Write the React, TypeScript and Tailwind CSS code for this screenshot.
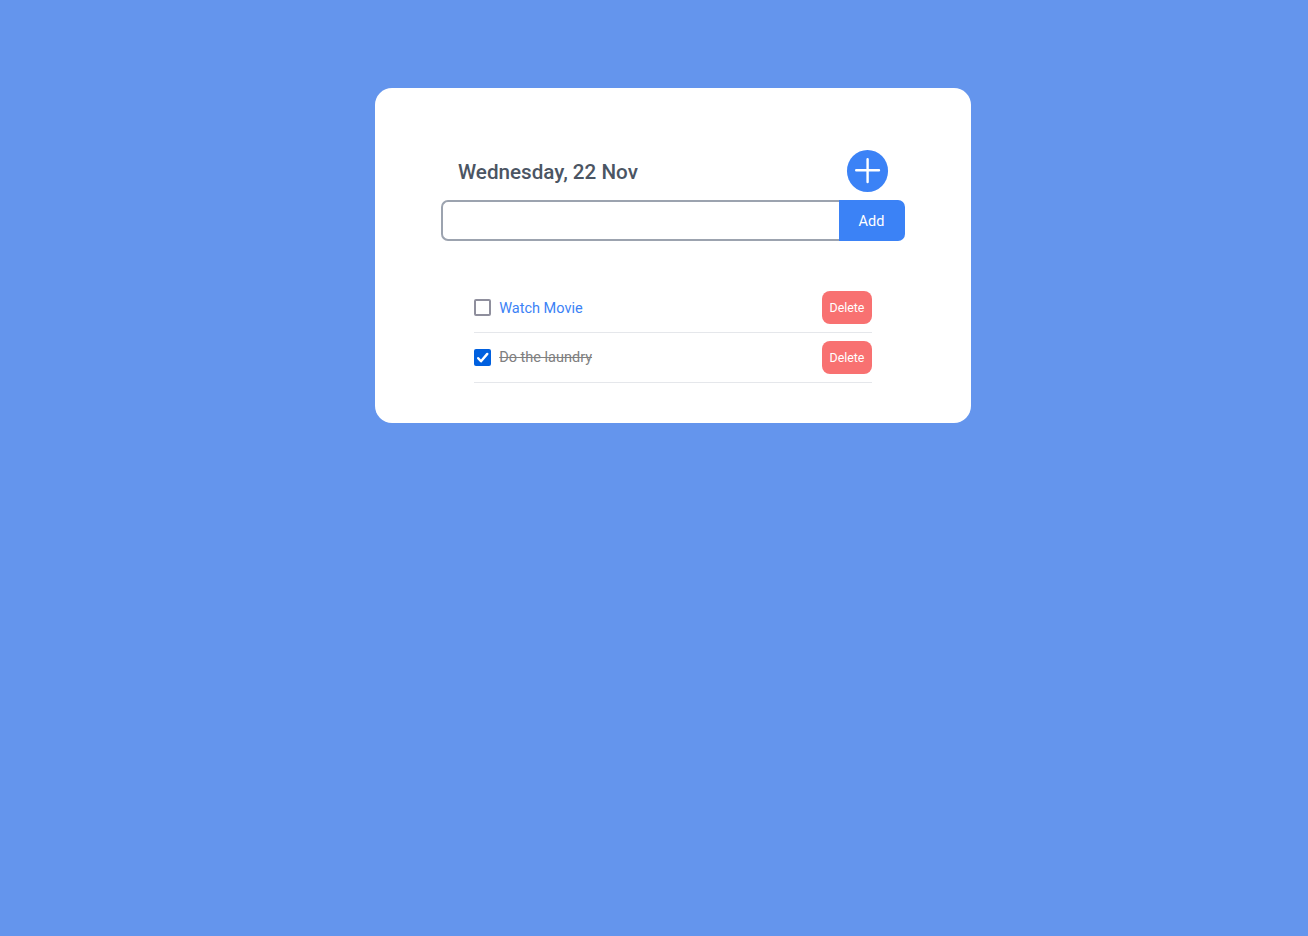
import React, { useState } from "react";

type Todo = { id: number; text: string; done: boolean };

const initialTodos: Todo[] = [
  { id: 1, text: "Watch Movie", done: false },
  { id: 2, text: "Do the laundry", done: true },
];

function CheckBox({ checked, onChange }: { checked: boolean; onChange: () => void }) {
  return (
    <button
      role="checkbox"
      aria-checked={checked}
      onClick={onChange}
      className={`flex h-[17px] w-[17px] shrink-0 items-center justify-center rounded-[2px] ${
        checked ? "bg-[#0060df]" : "border-2 border-[#8f8f9d] bg-white"
      }`}
    >
      {checked && (
        <svg viewBox="0 0 17 17" className="h-[17px] w-[17px]" fill="none" stroke="white" strokeWidth="2.4" strokeLinecap="round" strokeLinejoin="round">
          <path d="M4.2 9.2 7 12.3 13.3 4.9" />
        </svg>
      )}
    </button>
  );
}

export default function App() {
  const [todos, setTodos] = useState(initialTodos);
  const toggle = (id: number) => setTodos(todos.map((t) => (t.id === id ? { ...t, done: !t.done } : t)));
  const remove = (id: number) => setTodos(todos.filter((t) => t.id !== id));

  return (
    <div className="min-h-screen bg-[#6495ed] pt-[88px] pl-[375px] font-['Roboto',sans-serif]">
      <main className="h-[335px] w-[596px] rounded-[17px] bg-white px-[66px] pt-[62px]">
        <header className="flex h-[42px] items-center justify-between px-[17px]">
          <h1 className="pt-[3px] text-[20.65px] font-medium text-[#4b5563]">Wednesday, 22 Nov</h1>
          <button aria-label="New task" className="flex h-[42px] w-[41px] items-center justify-center rounded-full bg-[#3b82f6]">
            <svg viewBox="0 0 26 26" className="h-[26px] w-[26px]" fill="none" stroke="white" strokeWidth="2.4" strokeLinecap="round">
              <path d="M12.6 1.2v22.8M1.2 12.3h22.8" />
            </svg>
          </button>
        </header>
        <form className="mt-2 flex h-[41px]" onSubmit={(e) => e.preventDefault()}>
          <input aria-label="Task" className="w-[398px] rounded-l-[7px] border-2 border-r-0 border-[#9ca3af] px-3 outline-none" />
          <button className="w-[66px] rounded-r-[7px] bg-[#3b82f6] pt-[2px] pr-px text-[14.5px] text-white">Add</button>
        </form>
        <ul className="mt-[42px] px-[33px]">
          {todos.map((t) => (
            <li key={t.id} className="flex h-[50px] items-center border-b border-[#e5e7eb]">
              <CheckBox checked={t.done} onChange={() => toggle(t.id)} />
              <span className={`ml-[8.2px] text-[14.5px] ${t.done ? "text-[#808080] line-through" : "pt-[2px] text-[#3b82f6]"}`}>{t.text}</span>
              <button onClick={() => remove(t.id)} className="ml-auto h-[33px] w-[50px] rounded-[8px] bg-[#f87171] pt-[2px] text-[12.4px] text-white">
                Delete
              </button>
            </li>
          ))}
        </ul>
      </main>
    </div>
  );
}
